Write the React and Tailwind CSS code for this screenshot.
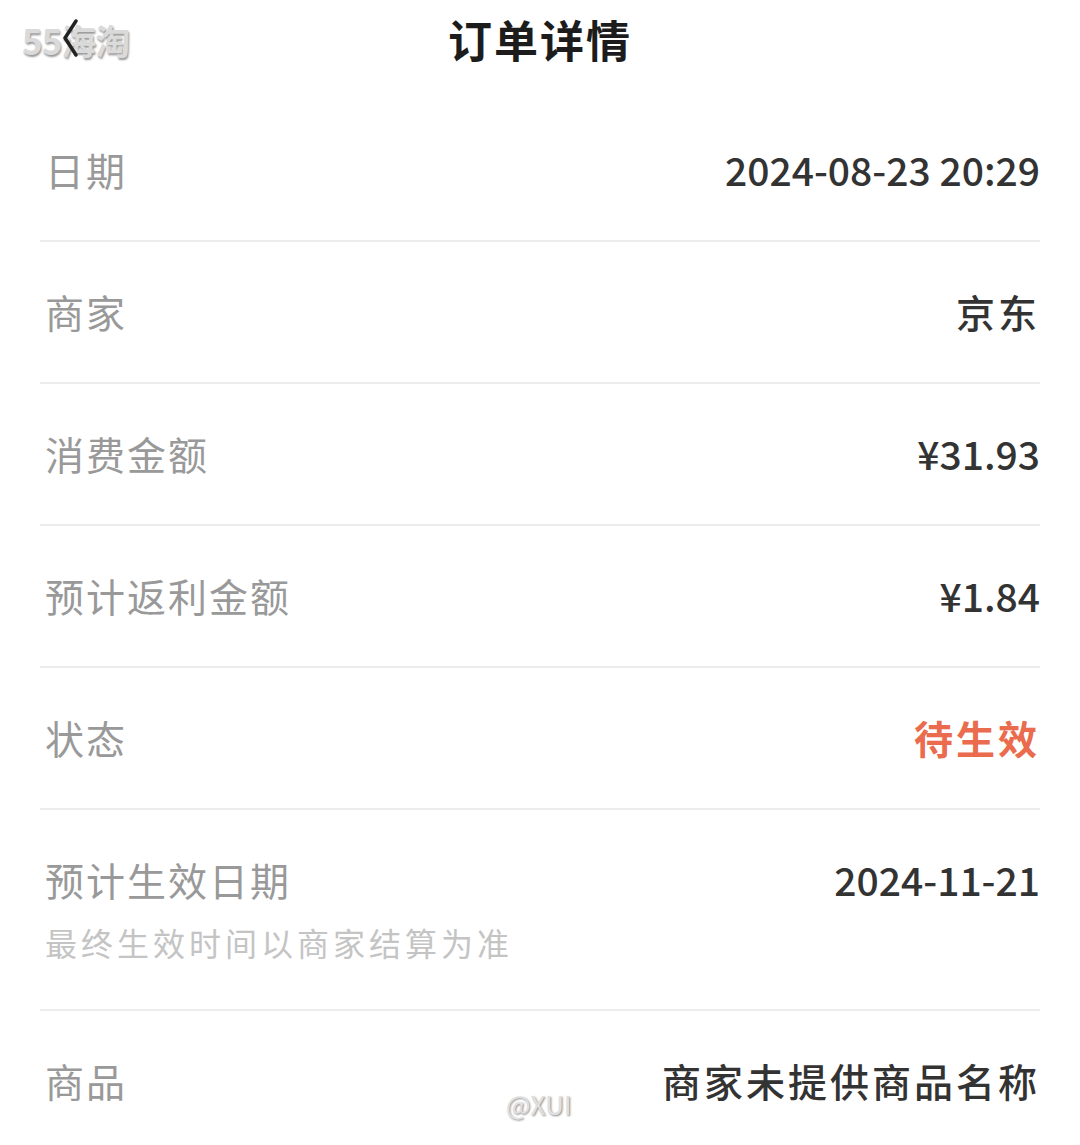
const font = { fontFamily: '"Noto Sans CJK SC", "Noto Sans", sans-serif' };

const rows = [
    { label: '日期', value: '2024-08-23 20:29', num: true },
    { label: '商家', value: '京东' },
    { label: '消费金额', value: '¥31.93', num: true },
    { label: '预计返利金额', value: '¥1.84', num: true },
    { label: '状态', value: '待生效', red: true },
    { label: '预计生效日期', value: '2024-11-21', num: true, note: '最终生效时间以商家结算为准' },
    { label: '商品', value: '商家未提供商品名称' },
];

function App() {
    return (
        <div className="relative w-[1080px] h-[1145px] overflow-hidden bg-white" style={font}>
            <header className="relative h-[100px] flex items-center justify-center">
                <span className="absolute left-[22px] top-[14px] text-[35px] font-bold text-[#dadada] [text-shadow:1px_2px_2px_#9a9a9a] tracking-[-1px]">
                    55海淘
                </span>
                <button className="absolute z-10 left-[56px] top-[16px] w-[30px] h-[44px] flex items-center justify-center">
                    <svg width="22" height="40" viewBox="0 0 22 40" fill="none">
                        <path d="M16 3 L5 20 L16 37" stroke="#222" strokeWidth="3.5" strokeLinecap="round" strokeLinejoin="round" />
                    </svg>
                </button>
                <h1 className="text-[44px] font-bold text-[#1c1c1c] tracking-[2px] -mt-[22px]">订单详情</h1>
            </header>

            <div className="px-10">
                {rows.map((r) => (
                    <div key={r.label} className="border-b-2 border-[#ececec]">
                        <div className={r.note ? 'h-[199px] pt-[42px]' : 'h-[140px] flex items-center'}>
                            <div className="flex items-center justify-between w-full -mt-[2px]">
                                <span className="pl-[5px] text-[39px] text-[#999999] tracking-[2px] leading-[58px]">{r.label}</span>
                                <span
                                    className={
                                        'text-[39px] leading-[58px] ' +
                                        (r.num ? 'tracking-[0px] ' : 'tracking-[3px] ') +
                                        (r.red ? 'text-[#ea6b4d] font-bold' : 'text-[#333333] font-medium')
                                    }
                                >
                                    {r.value}
                                </span>
                            </div>
                            {r.note && (
                                <p className="pl-[5px] mt-[4px] text-[32px] text-[#c4c4c4] tracking-[4px] leading-[60px]">{r.note}</p>
                            )}
                        </div>
                    </div>
                ))}
            </div>

            <span className="absolute left-[506px] top-[1084px] text-[26px] text-[#e0e0e0] [text-shadow:1px_1px_2px_#888]">@XUI</span>
        </div>
    );
}

export default App;
